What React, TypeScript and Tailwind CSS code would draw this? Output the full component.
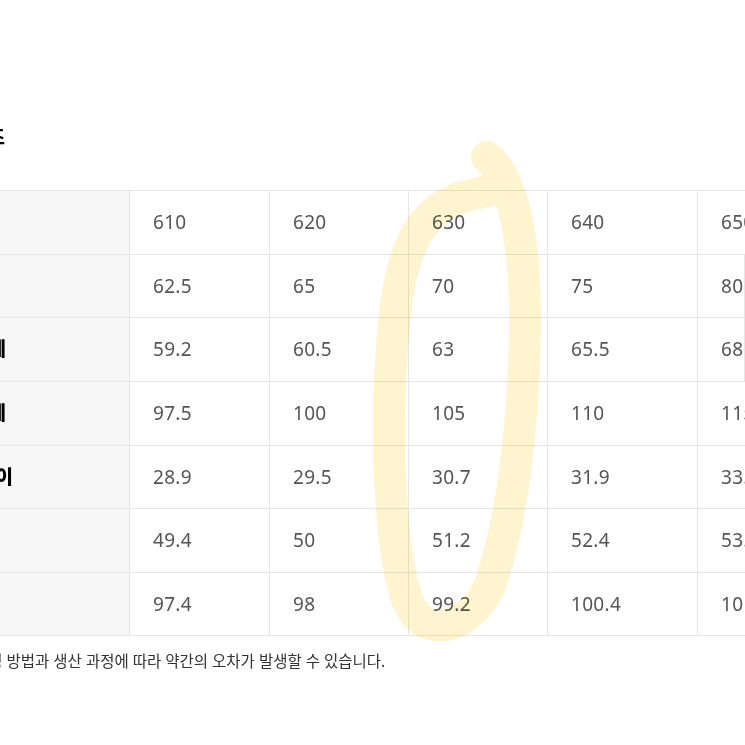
import React from "react"

const sizes = ["610", "620", "630", "640", "650"]

// label, shift so the cut edge lines up, row height, values
const rows = [
  { label: "사이즈", shift: "-ml-[69px]", h: "h-[64px]", values: ["610", "620", "630", "640", "650"] },
  { label: "총장", shift: "-ml-[69px]", h: "h-[63px]", values: ["62.5", "65", "70", "75", "80"] },
  { label: "허리 둘레", shift: "-ml-[69px]", h: "h-[64px]", values: ["59.2", "60.5", "63", "65.5", "68"] },
  { label: "엉덩 둘레", shift: "-ml-[69px]", h: "h-[64px]", values: ["97.5", "100", "105", "110", "115"] },
  { label: "밑위 길이", shift: "-ml-[62px]", h: "h-[63px]", values: ["28.9", "29.5", "30.7", "31.9", "33.1"] },
  { label: "허벅지", shift: "-ml-[69px]", h: "h-[64px]", values: ["49.4", "50", "51.2", "52.4", "53.6"] },
  { label: "밑단", shift: "-ml-[69px]", h: "h-[63px]", values: ["97.4", "98", "99.2", "100.4", "101.6"] },
]

function Highlighter() {
  return (
    <svg
      className="absolute inset-0 pointer-events-none mix-blend-multiply"
      width="745"
      height="745"
      viewBox="0 0 745 745"
    >
      <path
        d="M487 157 C514 178 526 246 525 330 C523 430 512 520 490 585 C470 630 424 640 408 602 C388 545 385 420 394 322 C401 250 420 208 466 196 L492 190"
        fill="none"
        stroke="#fef4cf"
        strokeWidth="32"
        strokeLinecap="round"
        strokeLinejoin="round"
      />
    </svg>
  )
}

export default function App() {
  return (
    <div className="relative w-[745px] h-[745px] overflow-hidden bg-white font-['Noto_Sans','Noto_Sans_CJK_KR',sans-serif]">
      {/* Title */}
      <div className="pt-[124px]">
        <h2 className="-ml-[92px] whitespace-nowrap text-[20px] leading-[28px] font-bold text-black">
          실측 사이즈
        </h2>
      </div>

      {/* Size table */}
      <div className="mt-[38px] border-t border-[#e6e6e6]">
        {rows.map((row) => (
          <div
            key={row.label}
            className={`grid grid-cols-[130px_140px_139px_139px_150px_1fr] border-b border-[#e6e6e6] ${row.h}`}
          >
            <div className="flex items-center border-r border-[#e6e6e6] bg-[#f7f7f7] overflow-hidden">
              <span className={`${row.shift} whitespace-nowrap text-[19px] font-black text-black`}>
                {row.label}
              </span>
            </div>
            {row.values.map((v, i) => (
              <div
                key={sizes[i]}
                className="flex items-center border-r border-[#e6e6e6] pl-[23px] text-[19px] tracking-[0.3px] text-[#555555]"
              >
                {v}
              </div>
            ))}
          </div>
        ))}
      </div>

      {/* Note */}
      <p className="mt-[14px] -ml-[43px] whitespace-nowrap text-[15.5px] leading-[22px] text-[#333333]">
        ※ 측정 방법과 생산 과정에 따라 약간의 오차가 발생할 수 있습니다.
      </p>

      <Highlighter />
    </div>
  )
}
